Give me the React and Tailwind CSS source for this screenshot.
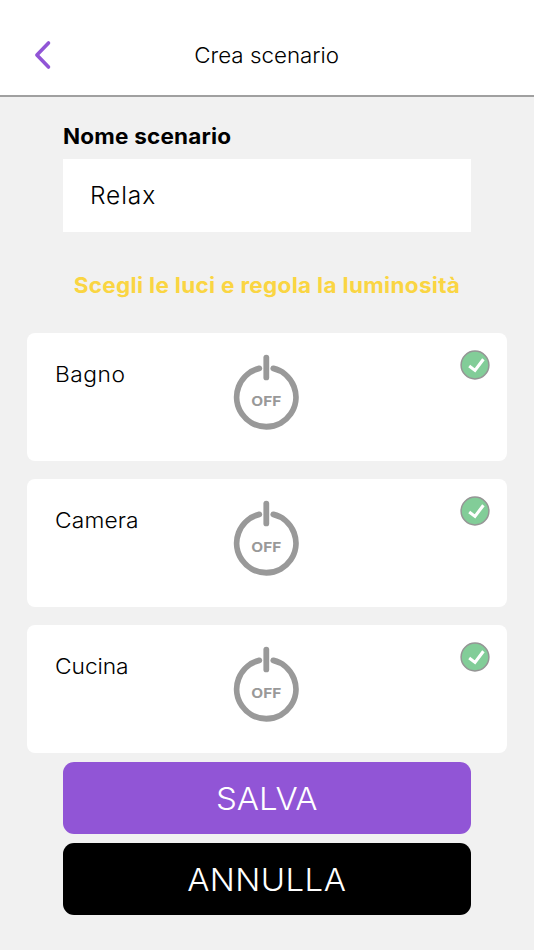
import { useState } from "react";

const lights = [
  { id: 1, name: "Bagno", spacing: "tracking-[0.45px]" },
  { id: 2, name: "Camera", spacing: "tracking-[0.1px]" },
  { id: 3, name: "Cucina", spacing: "tracking-[-0.1px]" },
];

const PowerButton = () => (
  <svg width="70" height="80" viewBox="0 0 70 80" className="block">
    <path
      d="M28.3 16.4A29.6 29.6 0 1 0 42.3 16.4"
      fill="none"
      stroke="#999999"
      strokeWidth="5.8"
      strokeLinecap="round"
    />
    <path
      d="M35.3 5.6V25.4"
      stroke="#999999"
      strokeWidth="5.8"
      strokeLinecap="round"
    />
    <text
      x="35.3"
      y="54"
      textAnchor="middle"
      textLength="30"
      lengthAdjust="spacingAndGlyphs"
      className="text-[13.5px] font-bold"
      fill="#999999"
    >
      OFF
    </text>
  </svg>
);

const CheckBadge = () => (
  <svg width="30" height="30" viewBox="0 0 30 30" className="block">
    <circle
      cx="15"
      cy="15"
      r="13.9"
      fill="#82cd98"
      stroke="#959595"
      strokeWidth="1.5"
    />
    <path d="M9.2 16L15 20.4L23.4 9.2" fill="none" stroke="#fff" strokeWidth="3.1" />
  </svg>
);

const LightCard = ({ light }) => (
  <div className="flex h-[128px] items-start justify-between rounded-lg bg-white">
    <p
      className={`w-[204px] origin-left scale-x-[1.06] pt-[25px] pl-[26.5px] text-[21.5px] leading-8 font-light ${light.spacing}`}
    >
      {light.name}
    </p>
    <button type="button" className="pt-[19px]">
      <PowerButton />
    </button>
    <div className="flex w-[206px] justify-end pt-[16.6px] pr-[17px]">
      <CheckBadge />
    </div>
  </div>
);

const App = () => {
  const [name, setName] = useState("Relax");

  return (
    <div className="flex h-[950px] w-full flex-col overflow-hidden bg-[#f1f1f1] font-['Inter','Open_Sans',sans-serif] text-black">
      {/* HEADER */}
      <header className="grid h-[97px] shrink-0 grid-cols-[1fr_auto_1fr] items-center border-b-2 border-[#a0a0a0] bg-white pt-[14px]">
        <button type="button" className="pl-[34px]">
          <svg width="18" height="30" viewBox="0 0 18 30" className="block">
            <path
              d="M14.5 3L2.9 15L14.5 27"
              fill="none"
              stroke="#9155d6"
              strokeWidth="3.6"
              strokeLinecap="round"
              strokeLinejoin="round"
            />
          </svg>
        </button>
        <h1 className="scale-x-[1.04] pt-0.5 text-[21.5px] font-light">
          Crea scenario
        </h1>
      </header>

      {/* NAME */}
      <div className="px-[63px] pt-6">
        <label
          htmlFor="name"
          className="block origin-left scale-x-[1.07] text-[21px] leading-8 font-bold tracking-[0.2px]"
        >
          Nome scenario
        </label>
        <input
          id="name"
          type="text"
          value={name}
          onChange={(e) => setName(e.target.value)}
          className="mt-1.5 block h-[73px] w-full bg-white pb-0.5 pl-[27px] text-[24.5px] font-light tracking-[0.9px] outline-none"
        />
      </div>

      <h2 className="mt-[38px] scale-x-[1.07] text-center text-[21px] leading-8 font-bold tracking-[0.3px] whitespace-nowrap text-[#fad542]">
        Scegli le luci e regola la luminosità
      </h2>

      {/* LIGHTS */}
      <div className="mt-[31px] flex flex-col gap-[18.2px] px-[27px]">
        {lights.map((light) => (
          <LightCard key={light.id} light={light} />
        ))}
      </div>

      {/* ACTIONS */}
      <div className="flex flex-col gap-[8.5px] px-[63px] pt-[8.6px]">
        <button
          type="button"
          className="h-[72.5px] rounded-[11px] bg-[#9155d6] pt-0.5 text-[31px] font-light text-white"
        >
          <span className="inline-block scale-x-[1.065]">SALVA</span>
        </button>
        <button
          type="button"
          className="h-[72.5px] rounded-[11px] bg-black pt-0.5 text-[31px] font-light tracking-[0.4px] text-white"
        >
          <span className="inline-block scale-x-[1.065]">ANNULLA</span>
        </button>
      </div>
    </div>
  );
};

export default App;
